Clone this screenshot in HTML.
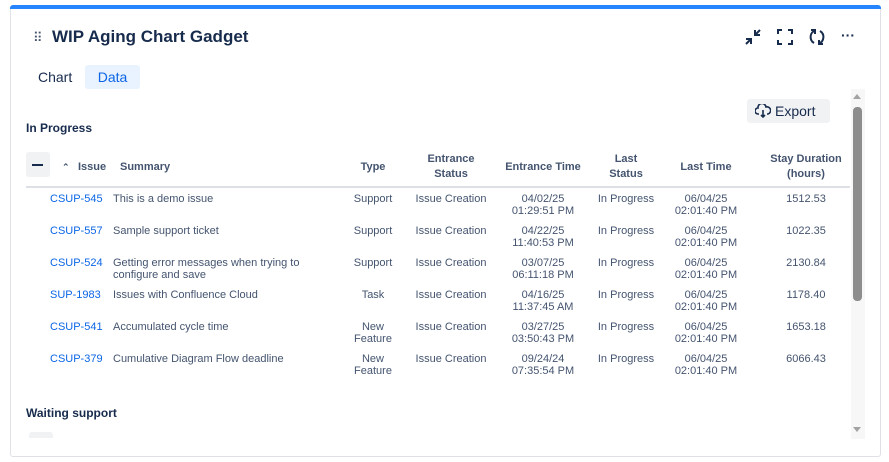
<!DOCTYPE html>
<html><head><style>
*{margin:0;padding:0;box-sizing:border-box}
body{width:889px;height:462px;background:#fff;font-family:"Liberation Sans",sans-serif;color:#172b4d;position:relative;overflow:hidden}
.card{position:absolute;left:10px;top:5px;width:871px;height:452px;border:1px solid #dfe1e6;border-top:none;border-radius:3px;}
.bar{position:absolute;left:10px;top:5px;width:871px;height:4px;background:#2684ff;border-radius:3px 3px 0 0}
.a{position:absolute;white-space:nowrap}
.h{font-size:11px;font-weight:bold;color:#44546f;text-align:center;line-height:15px}
.c{font-size:11px;color:#44546f;line-height:12px;text-align:center}
.l{font-size:11px;color:#0c66e4;line-height:12px}
.s{font-size:11px;color:#44546f;line-height:12px}
</style></head><body>
<div class="card"></div><div class="bar"></div>
<div class="a" style="left:33px;top:30px;font-size:13px;color:#44546f;letter-spacing:-1px">⠿</div>
<div class="a" style="left:52px;top:27px;font-size:17px;font-weight:bold">WIP Aging Chart Gadget</div>
<svg class="a" style="left:743px;top:28px" width="20" height="18" viewBox="0 0 20 18" fill="none" stroke="#172b4d" stroke-width="2"><path d="M3 16l5-5M3 11h5v5M17 2l-5 5M12 2v5h5"/></svg>
<svg class="a" style="left:776px;top:28px" width="18" height="18" viewBox="0 0 18 18" fill="none" stroke="#172b4d" stroke-width="2"><path d="M2 6V2h4M12 2h4v4M16 12v4h-4M6 16H2v-4"/></svg>
<svg class="a" style="left:808px;top:28px" width="18" height="18" viewBox="0 0 18 18" fill="none" stroke="#172b4d" stroke-width="2"><path d="M7 2.5A7 7 0 0 0 6 15M11 15.5A7 7 0 0 0 12 3"/><path d="M3 2h4v4M15 16h-4v-4"/></svg>
<div class="a" style="left:841px;top:27px;font-size:14px;font-weight:bold">···</div>
<div class="a" style="left:38px;top:69px;font-size:14px">Chart</div>
<div class="a" style="left:85px;top:65px;width:55px;height:24px;background:#e9f2ff;border-radius:3px;color:#0c66e4;font-size:14px;text-align:center;line-height:24px">Data</div>
<div class="a" style="left:747px;top:99px;width:83px;height:24px;background:#f1f2f4;border-radius:3px;font-size:14px;line-height:24px;padding-left:28px;color:#172b4d">Export</div>
<svg class="a" style="left:755px;top:104px" width="16" height="14" viewBox="0 0 16 14" fill="none" stroke="#172b4d" stroke-width="1.6"><path d="M4 10H3a3 3 0 0 1 0-6 4 4 0 0 1 8-1 3 3 0 0 1 2 7h-1M8 6v7M6 11l2 2 2-2"/></svg>
<div class="a" style="left:26px;top:121px;font-size:12px;font-weight:bold">In Progress</div>
<div class="a" style="left:26px;top:152px;width:24px;height:25px;background:#f1f2f4;border-radius:3px"></div>
<div class="a" style="left:32px;top:164px;width:11px;height:2px;background:#172b4d"></div>
<div class="a h" style="left:62px;top:160px;font-size:9px">⌃</div>
<div class="a h" style="left:78px;top:160px">Issue</div>
<div class="a h" style="left:120px;top:160px">Summary</div>
<div class="a h" style="left:353px;top:160px;width:40px">Type</div>
<div class="a h" style="left:411px;top:152px;width:80px">Entrance<br>Status</div>
<div class="a h" style="left:493px;top:160px;width:100px">Entrance Time</div>
<div class="a h" style="left:596px;top:152px;width:60px">Last<br>Status</div>
<div class="a h" style="left:666px;top:160px;width:80px">Last Time</div>
<div class="a h" style="left:756px;top:152px;width:100px">Stay Duration<br>(hours)</div>
<div class="a" style="left:26px;top:186px;width:824px;height:2px;background:#dcdfe4"></div>
<div class="a l" style="left:50px;top:193px">CSUP-545</div><div class="a s" style="left:113px;top:193px">This is a demo issue</div><div class="a c" style="left:343px;top:193px;width:60px">Support</div><div class="a c" style="left:406px;top:193px;width:90px">Issue Creation</div><div class="a c" style="left:493px;top:193px;width:100px">04/02/25<br>01:29:51 PM</div><div class="a c" style="left:586px;top:193px;width:80px">In Progress</div><div class="a c" style="left:656px;top:193px;width:100px">06/04/25<br>02:01:40 PM</div><div class="a c" style="left:756px;top:193px;width:100px">1512.53</div>
<div class="a l" style="left:50px;top:225px">CSUP-557</div><div class="a s" style="left:113px;top:225px">Sample support ticket</div><div class="a c" style="left:343px;top:225px;width:60px">Support</div><div class="a c" style="left:406px;top:225px;width:90px">Issue Creation</div><div class="a c" style="left:493px;top:225px;width:100px">04/22/25<br>11:40:53 PM</div><div class="a c" style="left:586px;top:225px;width:80px">In Progress</div><div class="a c" style="left:656px;top:225px;width:100px">06/04/25<br>02:01:40 PM</div><div class="a c" style="left:756px;top:225px;width:100px">1022.35</div>
<div class="a l" style="left:50px;top:257px">CSUP-524</div><div class="a s" style="left:113px;top:257px">Getting error messages when trying to<br>configure and save</div><div class="a c" style="left:343px;top:257px;width:60px">Support</div><div class="a c" style="left:406px;top:257px;width:90px">Issue Creation</div><div class="a c" style="left:493px;top:257px;width:100px">03/07/25<br>06:11:18 PM</div><div class="a c" style="left:586px;top:257px;width:80px">In Progress</div><div class="a c" style="left:656px;top:257px;width:100px">06/04/25<br>02:01:40 PM</div><div class="a c" style="left:756px;top:257px;width:100px">2130.84</div>
<div class="a l" style="left:50px;top:289px">SUP-1983</div><div class="a s" style="left:113px;top:289px">Issues with Confluence Cloud</div><div class="a c" style="left:343px;top:289px;width:60px">Task</div><div class="a c" style="left:406px;top:289px;width:90px">Issue Creation</div><div class="a c" style="left:493px;top:289px;width:100px">04/16/25<br>11:37:45 AM</div><div class="a c" style="left:586px;top:289px;width:80px">In Progress</div><div class="a c" style="left:656px;top:289px;width:100px">06/04/25<br>02:01:40 PM</div><div class="a c" style="left:756px;top:289px;width:100px">1178.40</div>
<div class="a l" style="left:50px;top:321px">CSUP-541</div><div class="a s" style="left:113px;top:321px">Accumulated cycle time</div><div class="a c" style="left:343px;top:321px;width:60px">New<br>Feature</div><div class="a c" style="left:406px;top:321px;width:90px">Issue Creation</div><div class="a c" style="left:493px;top:321px;width:100px">03/27/25<br>03:50:43 PM</div><div class="a c" style="left:586px;top:321px;width:80px">In Progress</div><div class="a c" style="left:656px;top:321px;width:100px">06/04/25<br>02:01:40 PM</div><div class="a c" style="left:756px;top:321px;width:100px">1653.18</div>
<div class="a l" style="left:50px;top:353px">CSUP-379</div><div class="a s" style="left:113px;top:353px">Cumulative Diagram Flow deadline</div><div class="a c" style="left:343px;top:353px;width:60px">New<br>Feature</div><div class="a c" style="left:406px;top:353px;width:90px">Issue Creation</div><div class="a c" style="left:493px;top:353px;width:100px">09/24/24<br>07:35:54 PM</div><div class="a c" style="left:586px;top:353px;width:80px">In Progress</div><div class="a c" style="left:656px;top:353px;width:100px">06/04/25<br>02:01:40 PM</div><div class="a c" style="left:756px;top:353px;width:100px">6066.43</div>
<div class="a" style="left:26px;top:406px;font-size:12px;font-weight:bold">Waiting support</div>
<div class="a" style="left:29px;top:432px;width:24px;height:6px;background:#f1f2f4;border-radius:3px 3px 0 0"></div>
<div class="a" style="left:851px;top:89px;width:14px;height:350px;background:#f7f7f7"></div>
<div class="a" style="left:853px;top:94px;width:0;height:0;border-left:4px solid transparent;border-right:4px solid transparent;border-bottom:5px solid #a3a3a3"></div>
<div class="a" style="left:853px;top:107px;width:9px;height:194px;background:#8d8d8d;border-radius:4px"></div>
<div class="a" style="left:853px;top:427px;width:0;height:0;border-left:4px solid transparent;border-right:4px solid transparent;border-top:5px solid #a3a3a3"></div>
</body></html>
